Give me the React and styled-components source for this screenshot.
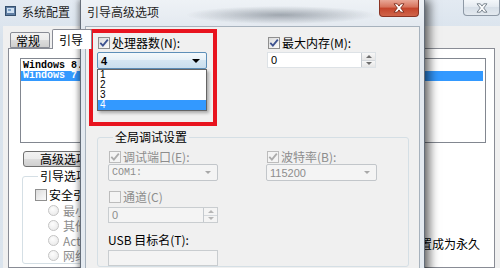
import React from 'react'
import styled, { createGlobalStyle } from 'styled-components'

const GlobalStyle = createGlobalStyle`
  html, body { margin: 0; padding: 0; background: #dfe7f0; }
  body {
    font-family: "Noto Sans CJK SC", "Liberation Sans", sans-serif;
    font-size: 12px;
    color: #000;
  }
  * { box-sizing: border-box; }
`

const Desktop = styled.div`
  position: relative;
  width: 500px;
  height: 268px;
  overflow: hidden;
`

/* ---------- back window: 系统配置 ---------- */

const BackWindow = styled.div`
  width: 500px;
  height: 268px;
  display: flex;
  flex-direction: column;
  background: linear-gradient(#e3eaf2, #d8e2ec 40px, #dbe4ed);
`

const TitleBar = styled.div`
  height: 26px;
  flex: none;
  display: flex;
  align-items: flex-start;
  padding-left: 5px;
`

const AppIcon = styled.svg`
  margin-top: 6px;
  flex: none;
`

const TitleText = styled.div`
  margin: 5px 0 0 6px;
  line-height: 14px;
  color: #1e1e1e;
`

const CloseBtn = styled.div`
  margin-left: auto;
  margin-right: ${p => p.$right || 0}px;
  width: ${p => p.$w}px;
  height: ${p => p.$h}px;
  display: flex;
  align-items: center;
  justify-content: center;
  border: 1px solid ${p => (p.$red ? '#8b3424' : '#8e99a6')};
  border-top: none;
  border-radius: 0 0 4px 4px;
  background: ${p =>
    p.$red
      ? 'linear-gradient(#e9a797, #d6715a 45%, #c4432a 50%, #d0654b)'
      : 'linear-gradient(#f4f7fa, #e4eaf0 45%, #d7dfe8 50%, #e3e9ef)'};
`

const Client = styled.div`
  flex: 1;
  margin-left: 3px;
  display: flex;
  flex-direction: column;
  background: #f0f0f0;
  min-height: 0;
`

const TabRow = styled.div`
  height: 22px;
  flex: none;
  display: flex;
  align-items: flex-end;
  padding-left: 7px;
  position: relative;
  z-index: 1;
`

const Tab = styled.div`
  height: ${p => (p.$active ? 20 : 16)}px;
  width: 40px;
  margin-left: ${p => (p.$active ? 2 : 0)}px;
  margin-bottom: ${p => (p.$active ? -1 : 0)}px;
  padding-left: ${p => (p.$active ? 6 : 5)}px;
  line-height: ${p => (p.$active ? 19 : 16)}px;
  border: 1px solid #898c95;
  border-bottom: ${p => (p.$active ? 'none' : '1px solid #898c95')};
  border-radius: 2px 2px 0 0;
  background: ${p => (p.$active ? '#fff' : 'linear-gradient(#f2f2f2, #ebebeb 50%, #dddddd 50%, #cfcfcf)')};
`

const TabPanel = styled.div`
  flex: 1;
  margin-left: 5px;
  width: 487px;
  border: 1px solid #898c95;
  background: #fff;
  padding: 9px 0 0 11px;
`

const ListBox = styled.div`
  width: 466px;
  height: 85px;
  border: 1px solid #828790;
  padding-top: 2px;
`

const ListRow = styled.div`
  height: 10px;
  line-height: 10px;
  margin-right: 2px;
  padding-left: 2px;
  font-family: "Liberation Mono", monospace;
  font-size: 10px;
  font-weight: bold;
  white-space: nowrap;
  color: ${p => (p.$selected ? '#fff' : '#000')};
  background: ${p => (p.$selected ? '#3399ff' : 'transparent')};
`

const PushButton = styled.div`
  width: 110px;
  height: 16px;
  margin: 8px 0 0 3px;
  padding-left: 16px;
  line-height: 14px;
  border: 1px solid #707070;
  border-radius: 3px;
  background: linear-gradient(#f2f2f2, #ebebeb 50%, #dddddd 50%, #cfcfcf);
`

const LowerRow = styled.div`
  display: flex;
`

const Group = styled.fieldset`
  margin: ${p => p.$margin};
  width: ${p => p.$w}px;
  padding: ${p => p.$pad};
  border: 1px solid #d5dfe5;
  border-radius: 3px;
  min-width: 0;
`

const GroupLegend = styled.legend`
  margin-left: ${p => p.$left}px;
  padding: 0 2px;
  line-height: 14px;
  font-size: 12px;
`

const CheckRow = styled.div`
  display: flex;
  align-items: center;
  height: 13px;
  margin: ${p => p.$margin || '0'};
  color: ${p => (p.$disabled ? '#8d8d8d' : '#000')};
  white-space: nowrap;
  line-height: 13px;
`

const Box = styled.div`
  width: 12px;
  height: 12px;
  flex: none;
  margin-right: 2px;
  display: flex;
  align-items: center;
  justify-content: center;
  border: 1px solid ${p => (p.$disabled ? '#bcbcbc' : '#8f8f8f')};
  background: ${p => (p.$disabled ? '#f4f4f4' : 'linear-gradient(135deg, #dcdcdc, #fbfbfb)')};
`

const RadioDot = styled.div`
  width: 11px;
  height: 11px;
  flex: none;
  margin-right: 4px;
  border-radius: 50%;
  border: 1px solid #c4c4c4;
  background: radial-gradient(circle at 40% 35%, #fdfdfd, #e6e6e6);
`

const RadioRow = styled.div`
  display: flex;
  align-items: center;
  height: 15px;
  padding-left: 13px;
  color: #8d8d8d;
  white-space: nowrap;
`

const SideNote = styled.div`
  margin: 70px 14px 0 auto;
  line-height: 14px;
  white-space: nowrap;
`

/* ---------- front dialog: 引导高级选项 ---------- */

const Dialog = styled.div`
  position: absolute;
  left: 80px;
  top: 0;
  width: 345px;
  height: 290px;
  display: flex;
  flex-direction: column;
  border: 1px solid rgba(45, 55, 70, 0.7);
  border-top: none;
  background:
    radial-gradient(ellipse 95px 9px at 200px 15px, rgba(70, 80, 92, 0.45), rgba(70, 80, 92, 0) 100%),
    linear-gradient(#eef2f6, #e2e8ef 30px, #e5ebf1);
  box-shadow: 5px 0 9px rgba(0, 0, 0, 0.55), -2px 0 5px rgba(0, 0, 0, 0.3);
`

const DlgTitleBar = styled.div`
  height: 26px;
  flex: none;
  display: flex;
  align-items: flex-start;
  padding-left: 6px;
`

const DlgTitle = styled.div`
  margin-top: 5px;
  line-height: 14px;
  color: #1e1e1e;
`

const DlgBody = styled.div`
  flex: 1;
  margin: 0 4px;
  border: 1px solid #a7b2bd;
  background: #f0f0f0;
  padding: 2px 0 0 3px;
`

const TopSection = styled.div`
  display: flex;
  align-items: flex-start;
`

const Highlight = styled.div`
  width: 128px;
  height: 97px;
  flex: none;
  border: 4px solid #e8141f;
  padding: 3px 0 0 4px;
`

const RightCol = styled.div`
  margin: 7px 0 0 50px;
  display: flex;
  flex-direction: column;
  gap: 3px;
`

const ComboWrap = styled.div`
  position: relative;
  margin-top: ${p => p.$top}px;
  width: ${p => p.$w || 110}px;
`

const Combo = styled.div`
  width: 100%;
  height: 17px;
  display: flex;
  align-items: center;
  padding: 0 6px 0 3px;
  font-family: ${p => (p.$mono ? '"Liberation Mono", monospace' : '"Liberation Sans", sans-serif')};
  font-size: ${p => (p.$mono ? 10 : 11)}px;
  border: 1px solid ${p => (p.$focused ? '#5d8fb8' : '#c2c6ca')};
  border-radius: 2px;
  color: ${p => (p.$focused ? '#000' : '#8d8d8d')};
  font-weight: ${p => (p.$focused ? 'bold' : 'normal')};
  white-space: nowrap;
  background: ${p =>
    p.$focused ? 'linear-gradient(#f4f9fc, #e6f0f7 50%, #d5e6f2 50%, #c9deed)' : '#f4f4f4'};
`

const ComboArrow = styled.div`
  margin-left: auto;
  width: 0;
  height: 0;
  border-left: ${p => (p.$dim ? 3 : 4)}px solid transparent;
  border-right: ${p => (p.$dim ? 3 : 4)}px solid transparent;
  border-top: ${p => (p.$dim ? 3 : 4)}px solid ${p => (p.$dim ? '#a8a8a8' : '#000')};
`

const DropList = styled.div`
  position: absolute;
  left: 0;
  top: 100%;
  width: 110px;
  border: 1px solid #646464;
  background: #fff;
  box-shadow: 2px 2px 3px rgba(0, 0, 0, 0.3);
`

const DropItem = styled.div`
  height: 10px;
  line-height: 10px;
  padding-left: 2px;
  font-family: "Liberation Sans", sans-serif;
  font-size: 10px;
  overflow: hidden;
  color: ${p => (p.$selected ? '#fff' : '#000')};
  background: ${p => (p.$selected ? '#3399ff' : 'transparent')};
`

const Spin = styled.div`
  width: ${p => p.$w}px;
  height: 16px;
  margin: ${p => p.$margin || '0'};
  display: flex;
  border: 1px solid ${p => (p.$disabled ? '#c9cdd0' : '#dde2e6')};
  background: ${p => (p.$disabled ? '#f4f4f4' : '#fff')};
  font-family: "Liberation Sans", sans-serif;
  font-size: 11px;
  color: ${p => (p.$disabled ? '#8d8d8d' : '#000')};
`

const SpinText = styled.div`
  flex: 1;
  padding-left: 3px;
  line-height: 14px;
`

const SpinButtons = styled.div`
  width: 14px;
  display: flex;
  flex-direction: column;
  border-left: 1px solid #c4c9ce;
`

const SpinHalf = styled.div`
  flex: 1;
  display: flex;
  align-items: center;
  justify-content: center;
  background: ${p => (p.$disabled ? '#f4f4f4' : 'linear-gradient(#f7f7f7, #e6e6e6)')};
  border-top: ${p => (p.$lower ? '1px solid #d4d8dc' : 'none')};
  &::after {
    content: '';
    border-left: 3px solid transparent;
    border-right: 3px solid transparent;
    ${p => (p.$lower ? 'border-top' : 'border-bottom')}: 3px solid ${p => (p.$disabled ? '#b5b5b5' : '#6e6e6e')};
  }
`

const DebugGrid = styled.div`
  display: grid;
  grid-template-columns: 110px 111px;
  column-gap: 48px;
  align-items: start;
`

const Column = styled.div`
  display: flex;
  flex-direction: column;
`

const PlainLabel = styled.div`
  margin-top: ${p => p.$top}px;
  line-height: 14px;
  white-space: nowrap;
`

const Check = ({ checked = true, disabled }) => (
  <Box $disabled={disabled}>
    {checked && (
      <svg width="10" height="10" viewBox="0 0 10 10">
        <path
          d="M1.3 4.8 L3.9 7.6 L8.8 1.6"
          fill="none"
          stroke={disabled ? '#acacac' : '#3d5290'}
          strokeWidth="1.8"
        />
      </svg>
    )}
  </Box>
)

const CloseGlyph = ({ fill, stroke }) => (
  <svg width="12" height="10" viewBox="0 0 12 10">
    <path
      d="M1 0.8 H4.3 L6 3.1 L7.7 0.8 H11 L7.7 5 L11 9.2 H7.7 L6 6.9 L4.3 9.2 H1 L4.3 5 Z"
      fill={fill}
      stroke={stroke}
      strokeWidth="0.9"
      strokeLinejoin="round"
    />
  </svg>
)

const SpinBox = ({ value, w, disabled, margin }) => (
  <Spin $w={w} $disabled={disabled} $margin={margin}>
    <SpinText>{value}</SpinText>
    <SpinButtons>
      <SpinHalf $disabled={disabled} />
      <SpinHalf $disabled={disabled} $lower />
    </SpinButtons>
  </Spin>
)

export default function App() {
  return (
    <>
      <GlobalStyle />
      <Desktop>
        <BackWindow>
          <TitleBar>
            <AppIcon width="11" height="10" viewBox="0 0 11 10">
              <rect x="0.5" y="0.5" width="10" height="9" fill="#5f7ea3" stroke="#36506e" />
              <rect x="2" y="2" width="7" height="5" fill="#cfe0f1" />
              <rect x="3" y="3" width="3" height="2" fill="#7da3c9" />
            </AppIcon>
            <TitleText>系统配置</TitleText>
            <CloseBtn $w={37} $h={16}>
              <CloseGlyph fill="#fbfcfd" stroke="#6f7a86" />
            </CloseBtn>
          </TitleBar>
          <Client>
            <TabRow>
              <Tab>常规</Tab>
              <Tab $active>引导</Tab>
            </TabRow>
            <TabPanel>
              <ListBox>
                <ListRow>Windows 8.1</ListRow>
                <ListRow $selected>Windows 7</ListRow>
              </ListBox>
              <PushButton>高级选项(V)...</PushButton>
              <LowerRow>
                <Group $w={300} $margin="2px 0 0 2px" $pad="2px 0 0 12px">
                  <GroupLegend $left={3}>引导选项</GroupLegend>
                  <CheckRow $margin="3px 0 2px 0">
                    <Check checked={false} />
                    安全引导(F)
                  </CheckRow>
                  <RadioRow>
                    <RadioDot />
                    最小(M)
                  </RadioRow>
                  <RadioRow>
                    <RadioDot />
                    其他外壳(L)
                  </RadioRow>
                  <RadioRow>
                    <RadioDot />
                    Active Directory
                  </RadioRow>
                  <RadioRow>
                    <RadioDot />
                    网络(N)
                  </RadioRow>
                </Group>
                <SideNote>使所有引导设置成为永久</SideNote>
              </LowerRow>
            </TabPanel>
          </Client>
        </BackWindow>

        <Dialog>
          <DlgTitleBar>
            <DlgTitle>引导高级选项</DlgTitle>
            <CloseBtn $red $w={40} $h={17} $right={5}>
              <CloseGlyph fill="#ffffff" stroke="#7e2a1a" />
            </CloseBtn>
          </DlgTitleBar>
          <DlgBody>
            <TopSection>
              <Highlight>
                <CheckRow $margin="0 0 0 1px">
                  <Check />
                  处理器数(N):
                </CheckRow>
                <ComboWrap $top={3}>
                  <Combo $focused>
                    4
                    <ComboArrow />
                  </Combo>
                  <DropList>
                    {['1', '2', '3', '4'].map(n => (
                      <DropItem key={n} $selected={n === '4'}>
                        {n}
                      </DropItem>
                    ))}
                  </DropList>
                </ComboWrap>
              </Highlight>
              <RightCol>
                <CheckRow $margin="0 0 0 1px">
                  <Check />
                  最大内存(M):
                </CheckRow>
                <SpinBox value="0" w={109} />
              </RightCol>
            </TopSection>

            <Group $w={312} $margin="4px 0 0 8px" $pad="6px 0 0 10px">
              <GroupLegend $left={5}>全局调试设置</GroupLegend>
              <DebugGrid>
                <Column>
                  <CheckRow $disabled $margin="0 0 0 1px">
                    <Check disabled />
                    调试端口(E):
                  </CheckRow>
                  <ComboWrap $top={1}>
                    <Combo $mono>
                      COM1:
                      <ComboArrow $dim />
                    </Combo>
                  </ComboWrap>
                  <CheckRow $disabled $margin="9px 0 0 1px">
                    <Check disabled checked={false} />
                    通道(C)
                  </CheckRow>
                  <SpinBox value="0" w={110} disabled margin="4px 0 0 0" />
                  <PlainLabel $top={10}>USB 目标名(T):</PlainLabel>
                  <Spin $w={110} $disabled $margin="3px 0 0 0" />
                </Column>
                <Column>
                  <CheckRow $disabled $margin="0 0 0 1px">
                    <Check disabled />
                    波特率(B):
                  </CheckRow>
                  <ComboWrap $top={1} $w={111}>
                    <Combo>
                      115200
                      <ComboArrow $dim />
                    </Combo>
                  </ComboWrap>
                </Column>
              </DebugGrid>
            </Group>
          </DlgBody>
        </Dialog>
      </Desktop>
    </>
  )
}
